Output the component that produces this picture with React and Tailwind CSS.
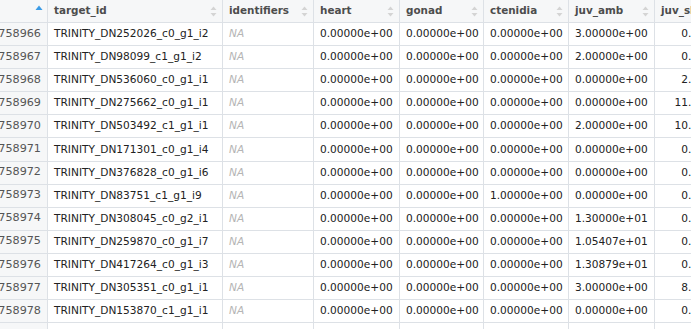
import React from 'react';

const cols = [
  { key: 'target_id', label: 'target_id', w: 'w-[175px]' },
  { key: 'identifiers', label: 'identifiers', w: 'w-[91px]' },
  { key: 'heart', label: 'heart', w: 'w-[86px]' },
  { key: 'gonad', label: 'gonad', w: 'w-[84px]' },
  { key: 'ctenidia', label: 'ctenidia', w: 'w-[85px]' },
  { key: 'juv_amb', label: 'juv_amb', w: 'w-[86px]' },
];

const Z = '0.00000e+00';

const rows = [
  ['758966', 'TRINITY_DN252026_c0_g1_i2', Z, Z, Z, '3.00000e+00', '0'],
  ['758967', 'TRINITY_DN98099_c1_g1_i2', Z, Z, Z, '2.00000e+00', '0'],
  ['758968', 'TRINITY_DN536060_c0_g1_i1', Z, Z, Z, Z, '2'],
  ['758969', 'TRINITY_DN275662_c0_g1_i1', Z, Z, Z, Z, '11'],
  ['758970', 'TRINITY_DN503492_c1_g1_i1', Z, Z, Z, '2.00000e+00', '10'],
  ['758971', 'TRINITY_DN171301_c0_g1_i4', Z, Z, Z, Z, '0'],
  ['758972', 'TRINITY_DN376828_c0_g1_i6', Z, Z, Z, Z, '0'],
  ['758973', 'TRINITY_DN83751_c1_g1_i9', Z, Z, '1.00000e+00', Z, '0'],
  ['758974', 'TRINITY_DN308045_c0_g2_i1', Z, Z, Z, '1.30000e+01', '0'],
  ['758975', 'TRINITY_DN259870_c0_g1_i7', Z, Z, Z, '1.05407e+01', '0'],
  ['758976', 'TRINITY_DN417264_c0_g1_i3', Z, Z, Z, '1.30879e+01', '0'],
  ['758977', 'TRINITY_DN305351_c0_g1_i1', Z, Z, Z, '3.00000e+00', '8'],
  ['758978', 'TRINITY_DN153870_c1_g1_i1', Z, Z, Z, Z, '0'],
];

function SortIcon({ active }) {
  if (active) {
    return (
      <svg width="8" height="6" viewBox="0 0 8 6" className="shrink-0">
        <path d="M4 0.5 L7.5 5 L0.5 5 Z" fill="#3b9be6" />
      </svg>
    );
  }
  return (
    <svg width="7" height="11" viewBox="0 0 7 11" className="shrink-0">
      <path d="M3.5 0.5 L6.5 4 L0.5 4 Z" fill="#d4d4d4" />
      <path d="M3.5 10.5 L6.5 7 L0.5 7 Z" fill="#d4d4d4" />
    </svg>
  );
}

const cell = 'h-full border-r border-[#dde1e6] flex items-center overflow-hidden whitespace-nowrap shrink-0';

export default function App() {
  return (
    <div
      className="w-[691px] h-[329px] overflow-hidden bg-white text-[10.6px] text-[#222]"
      style={{ fontFamily: '"DejaVu Sans", Verdana, sans-serif' }}
    >
      {/* header */}
      <div className="flex h-[23px] border-b border-[#dde1e6] bg-[#f6f7f8] font-bold text-[10.4px] text-[#4d4d4d]">
        <div className={`${cell} w-[48px] justify-end pr-[4px]`}>
          <div className="mb-[6px]">
            <SortIcon active />
          </div>
        </div>
        {cols.map((c) => (
          <div key={c.key} className={`${cell} ${c.w} justify-between pl-[6px] pr-[5px]`}>
            <span>{c.label}</span>
            <SortIcon />
          </div>
        ))}
        <div className={`${cell} w-[120px] pl-[6px] border-r-0`}>juv_sl</div>
      </div>

      {/* body */}
      {rows.map((r) => (
        <div key={r[0]} className="flex h-[23.1px] border-b border-[#dde1e6]">
          <div className={`${cell} w-[48px] justify-end pr-[6px] bg-[#f6f7f8] text-[#555] text-[11.2px]`}>
            <span>{r[0]}</span>
          </div>
          <div className={`${cell} w-[175px] pl-[6px]`}>{r[1]}</div>
          <div className={`${cell} w-[91px] pl-[6px] italic text-[#b5b5b5]`}>NA</div>
          <div className={`${cell} w-[86px] pl-[6px]`}>{r[2]}</div>
          <div className={`${cell} w-[84px] pl-[6px]`}>{r[3]}</div>
          <div className={`${cell} w-[85px] pl-[6px]`}>{r[4]}</div>
          <div className={`${cell} w-[86px] pl-[6px]`}>{r[5]}</div>
          <div className={`${cell} w-[120px] pl-[6px] border-r-0`}>
            <span className="inline-block w-[27px] text-right">{r[6]}</span>
            <span>.000000</span>
          </div>
        </div>
      ))}
      <div className="flex h-[23px]">
        <div className={`${cell} w-[48px] bg-[#f6f7f8]`} />
        <div className={`${cell} w-[175px]`} />
        <div className={`${cell} w-[91px]`} />
        <div className={`${cell} w-[86px]`} />
        <div className={`${cell} w-[84px]`} />
        <div className={`${cell} w-[85px]`} />
        <div className={`${cell} w-[86px]`} />
      </div>
    </div>
  );
}
